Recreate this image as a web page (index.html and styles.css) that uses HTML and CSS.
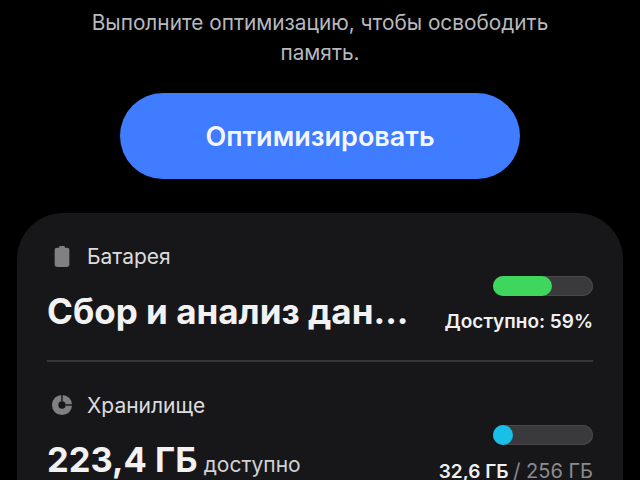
FILE: index.html
```html
<!DOCTYPE html>
<html lang="ru">
<head>
    <meta charset="UTF-8">
    <meta name="viewport" content="width=device-width, initial-scale=1.0">
    <title>Обслуживание устройства</title>
    <link rel="stylesheet" href="styles.css">
</head>
<body>

    <p class="hint">Выполните оптимизацию, чтобы освободить<br>память.</p>

    <button class="optimize">Оптимизировать</button>

    <div class="card">
        <div class="row">
            <div class="info">
                <div class="label">
                    <svg class="icon" viewBox="1 0 18 24"><path d="M7 1h6v2h2.500A2.500 2.500 0 0 1 18 5.500V21a3 3 0 0 1-3 3H5a3 3 0 0 1-3-3V5.500A2.500 2.500 0 0 1 4.500 3H7z" fill="#808083"/></svg>
                    <span>Батарея</span>
                </div>
                <div class="value long">Сбор и анализ дан...</div>
            </div>
            <div class="side">
                <div class="bar"><div class="fill green" style="width: 59%"></div></div>
                <div class="note">Доступно: 59%</div>
            </div>
        </div>

        <div class="divider"></div>

        <div class="row">
            <div class="info">
                <div class="label">
                    <svg class="icon" viewBox="0 0 24 24">
                        <circle cx="12" cy="12" r="7.500" fill="none" stroke="#808083" stroke-width="7"/>
                        <path d="M12 0v8M16 12h8" stroke="#17171a" stroke-width="1.500"/>
                    </svg>
                    <span>Хранилище</span>
                </div>
                <div class="value">223,4 ГБ <small>доступно</small></div>
            </div>
            <div class="side">
                <div class="bar"><div class="fill blue" style="width: 20px"></div></div>
                <div class="note"><b>32,6 ГБ</b> <span class="total">/ 256 ГБ</span></div>
            </div>
        </div>
    </div>

</body>
</html>
```

FILE: styles.css
```css
html, body {
    height: 480px;
    overflow: hidden;
}

body {
    background-color: black;
    color: white;
    font-family: Inter, "Liberation Sans", sans-serif;
    margin: 0;
    text-align: center;
}

.hint {
    color: #b9b9bb;
    font-size: 20.8px;
    line-height: 30px;
    margin: 8px 0 0;
}

.optimize {
    background-color: #3f7cff;
    border: 0;
    border-radius: 43px;
    color: #f4f7ff;
    display: block;
    font-family: inherit;
    font-size: 27px;
    font-weight: 600;
    height: 86px;
    margin: 25px auto 34px;
    width: 400px;
}

.card {
    background-color: #17171a;
    border-radius: 46px 46px 0 0;
    margin: 0 17px;
    padding: 28px 30px 0;
    text-align: left;
}

.row {
    align-items: flex-start;
    display: flex;
    justify-content: space-between;
}

.label {
    align-items: center;
    color: #dcdcde;
    display: flex;
    font-size: 21px;
    gap: 13px;
    height: 30px;
}

.icon {
    height: 22px;
    margin-left: 3px;
    width: 24px;
}

.value {
    color: #f2f2f2;
    font-size: 34.500px;
    font-weight: 700;
    line-height: 40px;
    margin-top: 20px;
    white-space: nowrap;
}

.long {
    font-size: 35px;
}

.value small {
    color: #d2d2d4;
    font-size: 21px;
    font-weight: 400;
    margin-left: -2px;
}

.side {
    align-items: flex-end;
    display: flex;
    flex-direction: column;
    padding-top: 35px;
}

.bar {
    background-color: #3a3a3d;
    border-radius: 11px;
    box-shadow: inset 0 0 0 1px #48484b;
    height: 20px;
    width: 100px;
}

.fill {
    border-radius: 11px;
    height: 20px;
}

.green {
    background-color: #3ed65c;
}

.blue {
    background-color: #18bfe6;
}

.note {
    color: #f0f0f0;
    font-size: 19px;
    font-weight: 600;
    line-height: 28px;
    margin-top: 12px;
    white-space: nowrap;
}

.note b {
    font-weight: 600;
}

.total {
    color: #8b8b8e;
    font-size: 20px;
    font-weight: 400;
}

.divider {
    background-color: #37373a;
    height: 2px;
    margin: 24px 0 28px;
}
```
